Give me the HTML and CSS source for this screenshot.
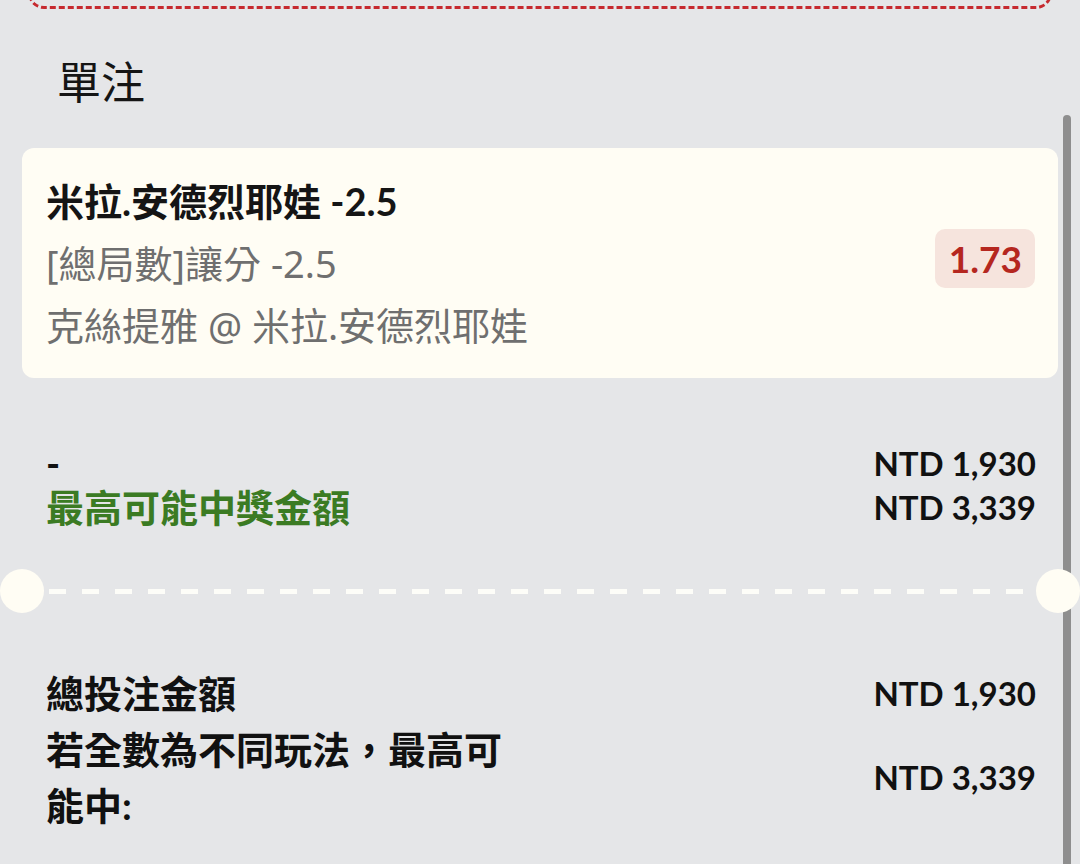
FILE: index.html
```html
<!DOCTYPE html>
<html lang="zh-Hant">
<head>
<meta charset="utf-8">
<link rel="stylesheet" href="styles.css">
</head>
<body>
<div class="page">
  <div class="prev-box"></div>
  <h2 class="section-title">單注</h2>

  <div class="bet-card">
    <div class="bet-info">
      <div class="bet-name">米拉.安德烈耶娃 -2.5</div>
      <div class="bet-sub">[總局數]讓分 -2.5</div>
      <div class="bet-sub">克絲提雅 @ 米拉.安德烈耶娃</div>
    </div>
    <div class="odds">1.73</div>
  </div>

  <div class="summary">
    <div class="sum-label">-</div>
    <div class="sum-value">NTD 1,930</div>
    <div class="sum-label green">最高可能中獎金額</div>
    <div class="sum-value">NTD 3,339</div>
  </div>

  <div class="divider">
    <span class="notch"></span>
    <span class="dash-line"></span>
    <span class="notch"></span>
  </div>

  <div class="totals">
    <div class="tot-label">總投注金額</div>
    <div class="tot-value">NTD 1,930</div>
    <div class="tot-label">若全數為不同玩法，最高可能中:</div>
    <div class="tot-value">NTD 3,339</div>
  </div>
</div>
<div class="scroll-thumb"></div>
</body>
</html>
```

FILE: styles.css
```css
html, body {
  margin: 0;
  padding: 0;
}
body {
  background: #e5e6e8;
  font-family: "Lato", "Noto Sans CJK TC", sans-serif;
  color: #111;
  width: 1080px;
  height: 864px;
  overflow: hidden;
  position: relative;
}
.page {
  padding: 0 22px;
}
.prev-box {
  height: 40px;
  margin: -37px 6px 0;
  border: 3px dashed #c62a2f;
  border-radius: 16px;
}
.section-title {
  margin: 0;
  padding: 41px 0 0 35px;
  font-family: "Noto Sans CJK TC", sans-serif;
  font-weight: 400;
  font-size: 44px;
  line-height: 60px;
  color: #151515;
}
.bet-card {
  margin-top: 38px;
  height: 230px;
  box-sizing: border-box;
  background: #fffdf4;
  border-radius: 12px;
  padding: 22px 23px 22px 24px;
  display: flex;
  align-items: center;
  justify-content: space-between;
}
.bet-info {
  display: flex;
  flex-direction: column;
}
.bet-name {
  font-size: 38px;
  line-height: 62px;
  font-weight: 700;
  color: #151515;
}
.bet-sub {
  font-family: "Noto Sans", "Noto Sans CJK TC", sans-serif;
  font-size: 38px;
  line-height: 62px;
  font-weight: 400;
  color: #6f6f6f;
}
.odds {
  margin-top: -10px;
  background: #f6e4dd;
  color: #b5271f;
  font-weight: 700;
  font-size: 37px;
  line-height: 59px;
  padding: 0 13px 0 14px;
  border-radius: 10px;
}
.summary {
  margin-top: 63px;
  padding: 0 22px 0 24px;
  display: grid;
  grid-template-columns: 1fr auto;
  align-items: center;
  font-size: 38px;
  line-height: 44px;
  font-weight: 700;
}
.sum-value {
  text-align: right;
  font-size: 33px;
}
.green {
  color: #3b7b23;
}
.divider {
  margin: 40px -22px 0;
  display: flex;
  align-items: center;
  height: 44px;
}
.notch {
  width: 44px;
  height: 44px;
  border-radius: 50%;
  background: #fffdf4;
  flex: none;
  position: relative;
  z-index: 2;
}
.dash-line {
  flex: 1;
  height: 5px;
  margin: 0 6px 0 5px;
  background: repeating-linear-gradient(to right, #fdfdf8 0 17px, transparent 17px 33px);
}
.totals {
  margin-top: 52px;
  padding: 0 22px 0 24px;
  display: grid;
  grid-template-columns: 480px 1fr;
  align-items: center;
  font-size: 38px;
  line-height: 56px;
  font-weight: 700;
}
.tot-value {
  text-align: right;
  font-size: 33px;
}
.scroll-thumb {
  position: absolute;
  top: 115px;
  right: 9px;
  width: 8px;
  height: 780px;
  border-radius: 4px;
  background: #8e8e8e;
  z-index: 1;
}
```
